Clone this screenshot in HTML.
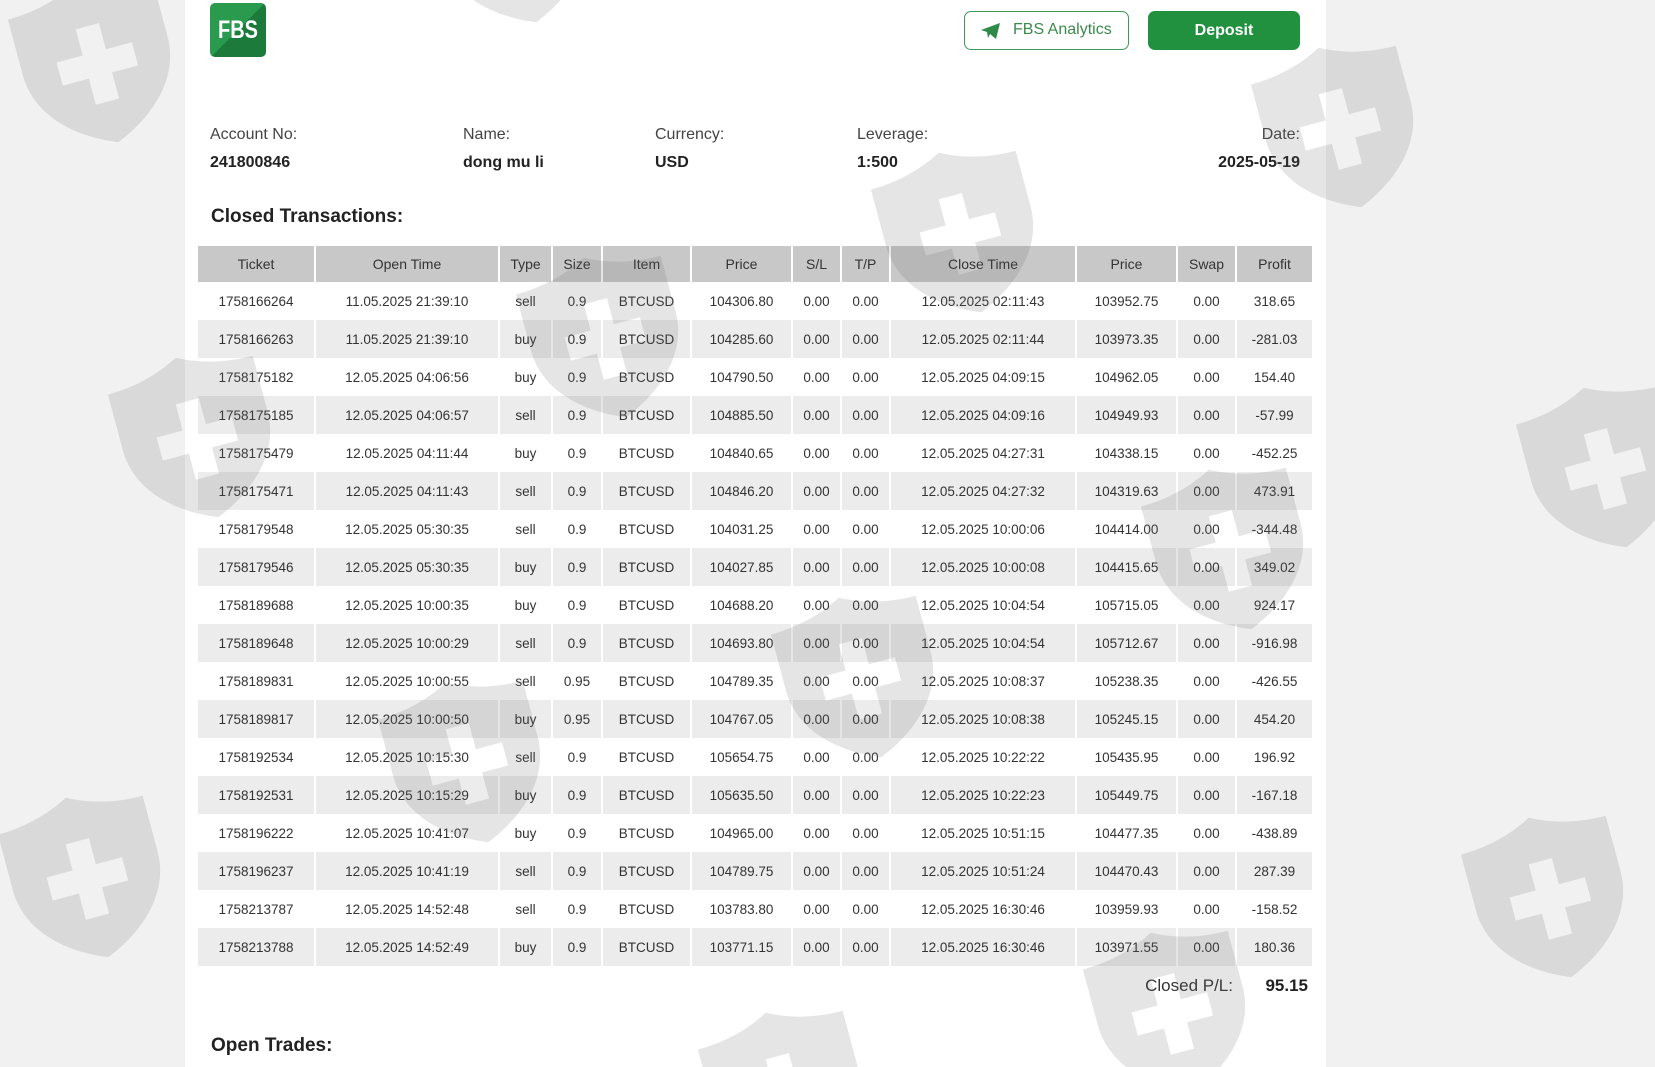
<!DOCTYPE html>
<html><head><meta charset="utf-8"><style>
*{margin:0;padding:0;box-sizing:border-box}
html,body{width:1655px;height:1067px;overflow:hidden}
body{background:#f1f1f1;font-family:"Liberation Sans",Arial,sans-serif;color:#333}
#wrap{position:relative;width:1655px;height:1067px;overflow:hidden}
.page{position:absolute;left:185px;top:0;width:1141px;height:1067px;background:#fff}
.abs{position:absolute}
.logo{left:210px;top:3px;width:56px;height:54px;border-radius:5px;background:linear-gradient(135deg,#2a9a4e 50%,#1c7a3a 50%);overflow:hidden}
.logo span{position:absolute;left:0;right:0;top:13px;text-align:center;color:#fff;font-weight:bold;font-size:25px;transform:scaleX(.8)}
.btn1{left:964px;top:11px;width:165px;height:39px;border:1.5px solid #3a9a5c;border-radius:7px;color:#3b8a4c;font-size:16px;line-height:36px;padding-left:48px}
.btn2{left:1148px;top:11px;width:152px;height:39px;background:#22913f;border-radius:7px;color:#fff;font-size:16px;line-height:39px;text-align:center;font-weight:bold}
.lbl{font-size:16px;color:#444}
.val{font-size:16px;font-weight:bold;color:#222}
h3{position:absolute;font-size:19px;font-weight:bold;color:#222}
table{position:absolute;left:198px;top:246px;width:1114px;border-collapse:collapse;font-size:13.5px}
th{background:#c8c8c8;height:36px;font-weight:normal;color:#333;border-left:2px solid #fff;font-size:14px}
th:first-child,td:first-child{border-left:0}
td{height:38px;text-align:center;border-left:2px solid #fff;color:#333}
tr:nth-child(odd) td{background:#ececec}
.wm{position:absolute;width:150px;height:165px;pointer-events:none}
</style></head><body><div id="wrap">
<div class="page"></div>
<div class="abs logo"><span>FBS</span></div>
<div class="abs btn1"><svg style="position:absolute;left:16px;top:11px" width="20" height="16" viewBox="0 0 20 16"><path d="M0 7 L19 0 L15 16 L9 11 L7 15 L6 9 Z" fill="#2f8a48"/></svg>FBS Analytics</div>
<div class="abs btn2">Deposit</div>

<div class="abs lbl" style="left:210px;top:126px">Account No:</div>
<div class="abs val" style="left:210px;top:154px">241800846</div>
<div class="abs lbl" style="left:463px;top:126px">Name:</div>
<div class="abs val" style="left:463px;top:154px">dong mu li</div>
<div class="abs lbl" style="left:655px;top:126px">Currency:</div>
<div class="abs val" style="left:655px;top:154px">USD</div>
<div class="abs lbl" style="left:857px;top:126px">Leverage:</div>
<div class="abs val" style="left:857px;top:154px">1:500</div>
<div class="abs lbl" style="right:355px;top:126px">Date:</div>
<div class="abs val" style="right:355px;top:154px">2025-05-19</div>

<h3 style="left:211px;top:206px">Closed Transactions:</h3>

<table>
<colgroup><col style="width:117px"><col style="width:184px"><col style="width:53px"><col style="width:50px"><col style="width:89px"><col style="width:101px"><col style="width:49px"><col style="width:49px"><col style="width:186px"><col style="width:101px"><col style="width:59px"><col style="width:76px"></colgroup>
<tr><th>Ticket</th><th>Open Time</th><th>Type</th><th>Size</th><th>Item</th><th>Price</th><th>S/L</th><th>T/P</th><th>Close Time</th><th>Price</th><th>Swap</th><th>Profit</th></tr>
<tr><td>1758166264</td><td>11.05.2025 21:39:10</td><td>sell</td><td>0.9</td><td>BTCUSD</td><td>104306.80</td><td>0.00</td><td>0.00</td><td>12.05.2025 02:11:43</td><td>103952.75</td><td>0.00</td><td>318.65</td></tr>
<tr><td>1758166263</td><td>11.05.2025 21:39:10</td><td>buy</td><td>0.9</td><td>BTCUSD</td><td>104285.60</td><td>0.00</td><td>0.00</td><td>12.05.2025 02:11:44</td><td>103973.35</td><td>0.00</td><td>-281.03</td></tr>
<tr><td>1758175182</td><td>12.05.2025 04:06:56</td><td>buy</td><td>0.9</td><td>BTCUSD</td><td>104790.50</td><td>0.00</td><td>0.00</td><td>12.05.2025 04:09:15</td><td>104962.05</td><td>0.00</td><td>154.40</td></tr>
<tr><td>1758175185</td><td>12.05.2025 04:06:57</td><td>sell</td><td>0.9</td><td>BTCUSD</td><td>104885.50</td><td>0.00</td><td>0.00</td><td>12.05.2025 04:09:16</td><td>104949.93</td><td>0.00</td><td>-57.99</td></tr>
<tr><td>1758175479</td><td>12.05.2025 04:11:44</td><td>buy</td><td>0.9</td><td>BTCUSD</td><td>104840.65</td><td>0.00</td><td>0.00</td><td>12.05.2025 04:27:31</td><td>104338.15</td><td>0.00</td><td>-452.25</td></tr>
<tr><td>1758175471</td><td>12.05.2025 04:11:43</td><td>sell</td><td>0.9</td><td>BTCUSD</td><td>104846.20</td><td>0.00</td><td>0.00</td><td>12.05.2025 04:27:32</td><td>104319.63</td><td>0.00</td><td>473.91</td></tr>
<tr><td>1758179548</td><td>12.05.2025 05:30:35</td><td>sell</td><td>0.9</td><td>BTCUSD</td><td>104031.25</td><td>0.00</td><td>0.00</td><td>12.05.2025 10:00:06</td><td>104414.00</td><td>0.00</td><td>-344.48</td></tr>
<tr><td>1758179546</td><td>12.05.2025 05:30:35</td><td>buy</td><td>0.9</td><td>BTCUSD</td><td>104027.85</td><td>0.00</td><td>0.00</td><td>12.05.2025 10:00:08</td><td>104415.65</td><td>0.00</td><td>349.02</td></tr>
<tr><td>1758189688</td><td>12.05.2025 10:00:35</td><td>buy</td><td>0.9</td><td>BTCUSD</td><td>104688.20</td><td>0.00</td><td>0.00</td><td>12.05.2025 10:04:54</td><td>105715.05</td><td>0.00</td><td>924.17</td></tr>
<tr><td>1758189648</td><td>12.05.2025 10:00:29</td><td>sell</td><td>0.9</td><td>BTCUSD</td><td>104693.80</td><td>0.00</td><td>0.00</td><td>12.05.2025 10:04:54</td><td>105712.67</td><td>0.00</td><td>-916.98</td></tr>
<tr><td>1758189831</td><td>12.05.2025 10:00:55</td><td>sell</td><td>0.95</td><td>BTCUSD</td><td>104789.35</td><td>0.00</td><td>0.00</td><td>12.05.2025 10:08:37</td><td>105238.35</td><td>0.00</td><td>-426.55</td></tr>
<tr><td>1758189817</td><td>12.05.2025 10:00:50</td><td>buy</td><td>0.95</td><td>BTCUSD</td><td>104767.05</td><td>0.00</td><td>0.00</td><td>12.05.2025 10:08:38</td><td>105245.15</td><td>0.00</td><td>454.20</td></tr>
<tr><td>1758192534</td><td>12.05.2025 10:15:30</td><td>sell</td><td>0.9</td><td>BTCUSD</td><td>105654.75</td><td>0.00</td><td>0.00</td><td>12.05.2025 10:22:22</td><td>105435.95</td><td>0.00</td><td>196.92</td></tr>
<tr><td>1758192531</td><td>12.05.2025 10:15:29</td><td>buy</td><td>0.9</td><td>BTCUSD</td><td>105635.50</td><td>0.00</td><td>0.00</td><td>12.05.2025 10:22:23</td><td>105449.75</td><td>0.00</td><td>-167.18</td></tr>
<tr><td>1758196222</td><td>12.05.2025 10:41:07</td><td>buy</td><td>0.9</td><td>BTCUSD</td><td>104965.00</td><td>0.00</td><td>0.00</td><td>12.05.2025 10:51:15</td><td>104477.35</td><td>0.00</td><td>-438.89</td></tr>
<tr><td>1758196237</td><td>12.05.2025 10:41:19</td><td>sell</td><td>0.9</td><td>BTCUSD</td><td>104789.75</td><td>0.00</td><td>0.00</td><td>12.05.2025 10:51:24</td><td>104470.43</td><td>0.00</td><td>287.39</td></tr>
<tr><td>1758213787</td><td>12.05.2025 14:52:48</td><td>sell</td><td>0.9</td><td>BTCUSD</td><td>103783.80</td><td>0.00</td><td>0.00</td><td>12.05.2025 16:30:46</td><td>103959.93</td><td>0.00</td><td>-158.52</td></tr>
<tr><td>1758213788</td><td>12.05.2025 14:52:49</td><td>buy</td><td>0.9</td><td>BTCUSD</td><td>103771.15</td><td>0.00</td><td>0.00</td><td>12.05.2025 16:30:46</td><td>103971.55</td><td>0.00</td><td>180.36</td></tr>
</table>

<div class="abs" style="right:422px;top:976px;font-size:17px;color:#333">Closed P/L:</div>
<div class="abs" style="right:347px;top:976px;font-size:17px;font-weight:bold;color:#222">95.15</div>
<h3 style="left:211px;top:1035px">Open Trades:</h3>

<svg width="0" height="0" style="position:absolute"><defs><path id="sh" fill-rule="evenodd" d="M50 0 C35 8 18 12 0 12 L0 50 C0 80 25 100 50 110 C75 100 100 80 100 50 L100 12 C82 12 65 8 50 0 Z M42 30 h16 v18 h18 v16 h-18 v18 h-16 v-18 h-18 v-16 h18 Z"/></defs></svg>
<svg class="wm" style="left:22px;top:-20px;transform:rotate(-15deg)" viewBox="0 0 100 110"><use href="#sh" fill="rgba(100,100,100,.17)"/></svg>
<svg class="wm" style="left:1265px;top:45px;transform:rotate(-15deg)" viewBox="0 0 100 110"><use href="#sh" fill="rgba(100,100,100,.17)"/></svg>
<svg class="wm" style="left:885px;top:150px;transform:rotate(-15deg)" viewBox="0 0 100 110"><use href="#sh" fill="rgba(100,100,100,.17)"/></svg>
<svg class="wm" style="left:530px;top:255px;transform:rotate(-15deg)" viewBox="0 0 100 110"><use href="#sh" fill="rgba(100,100,100,.17)"/></svg>
<svg class="wm" style="left:122px;top:355px;transform:rotate(-15deg)" viewBox="0 0 100 110"><use href="#sh" fill="rgba(100,100,100,.17)"/></svg>
<svg class="wm" style="left:1155px;top:467px;transform:rotate(-15deg)" viewBox="0 0 100 110"><use href="#sh" fill="rgba(100,100,100,.17)"/></svg>
<svg class="wm" style="left:1530px;top:385px;transform:rotate(-15deg)" viewBox="0 0 100 110"><use href="#sh" fill="rgba(100,100,100,.17)"/></svg>
<svg class="wm" style="left:785px;top:595px;transform:rotate(-15deg)" viewBox="0 0 100 110"><use href="#sh" fill="rgba(100,100,100,.17)"/></svg>
<svg class="wm" style="left:392px;top:680px;transform:rotate(-15deg)" viewBox="0 0 100 110"><use href="#sh" fill="rgba(100,100,100,.17)"/></svg>
<svg class="wm" style="left:12px;top:795px;transform:rotate(-15deg)" viewBox="0 0 100 110"><use href="#sh" fill="rgba(100,100,100,.17)"/></svg>
<svg class="wm" style="left:1475px;top:815px;transform:rotate(-15deg)" viewBox="0 0 100 110"><use href="#sh" fill="rgba(100,100,100,.17)"/></svg>
<svg class="wm" style="left:1097px;top:930px;transform:rotate(-15deg)" viewBox="0 0 100 110"><use href="#sh" fill="rgba(100,100,100,.17)"/></svg>
<svg class="wm" style="left:712px;top:1010px;transform:rotate(-15deg)" viewBox="0 0 100 110"><use href="#sh" fill="rgba(100,100,100,.17)"/></svg>
<svg class="wm" style="left:440px;top:-140px;transform:rotate(-15deg)" viewBox="0 0 100 110"><use href="#sh" fill="rgba(100,100,100,.17)"/></svg>
</div></body></html>
